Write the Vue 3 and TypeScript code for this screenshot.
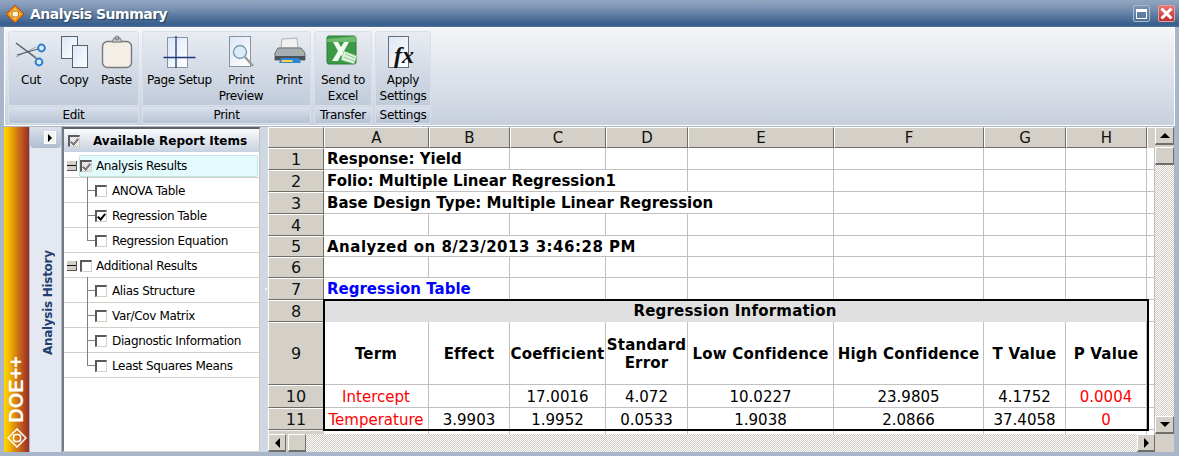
<script setup lang="ts">
interface Cell { t?: string; span?: number; cls?: string }
interface Row { n: number; h: number; cells: Cell[] }

const columnLetters = ['A', 'B', 'C', 'D', 'E', 'F', 'G', 'H']
const columnWidths = [105, 81, 96, 82, 146, 150, 82, 81, 8]

function blanks(count: number): Cell[] {
  return Array.from({ length: count }, () => ({}))
}
function lead(n: number, h: number, text: string, span: number, cls = 'b'): Row {
  return { n, h, cells: [{ t: text, span, cls }, ...blanks(9 - span)] }
}
function heads(list: string[]): Cell[] {
  return list.map((t) => ({ t, cls: 'b c' }))
}
function values(list: string[]): Cell[] {
  return list.map((t, i) => ({ t, cls: i === 0 || i === 7 ? 'c red low' : 'c low' }))
}

const rows: Row[] = [
  lead(1, 22, 'Response: Yield', 2),
  lead(2, 22, 'Folio: Multiple Linear Regression1', 4),
  lead(3, 22, 'Base Design Type: Multiple Linear Regression', 5),
  { n: 4, h: 22, cells: blanks(9) },
  lead(5, 21, 'Analyzed on 8/23/2013 3:46:28 PM', 4, 'b wide'),
  { n: 6, h: 21, cells: blanks(9) },
  lead(7, 22, 'Regression Table', 2, 'b blue'),
  { n: 8, h: 22, cells: [{ t: 'Regression Information', span: 8, cls: 'b c band' }, {}] },
  { n: 9, h: 63, cells: [...heads(['Term', 'Effect', 'Coefficient', 'Standard Error', 'Low Confidence', 'High Confidence', 'T Value', 'P Value']), {}] },
  { n: 10, h: 23, cells: [...values(['Intercept', '', '17.0016', '4.072', '10.0227', '23.9805', '4.1752', '0.0004']), {}] },
  { n: 11, h: 22, cells: [...values(['Temperature', '3.9903', '1.9952', '0.0533', '1.9038', '2.0866', '37.4058', '0']), {}] },
]

const gridColumns = `56px ${columnWidths.map((w) => `${w}px`).join(' ')}`
const gridRows = `21px ${rows.map((r) => `${r.h}px`).join(' ')} 4px`
const spanStyle = (c: Cell) => (c.span ? { gridColumn: `span ${c.span}` } : undefined)

interface Item { label: string; child?: boolean; state?: 'on' | 'mixed'; hot?: boolean; line?: 'mid' | 'end' }
const items: Item[] = [
  { label: 'Analysis Results', state: 'mixed', hot: true },
  { label: 'ANOVA Table', child: true, line: 'mid' },
  { label: 'Regression Table', child: true, state: 'on', line: 'mid' },
  { label: 'Regression Equation', child: true, line: 'end' },
  { label: 'Additional Results' },
  { label: 'Alias Structure', child: true, line: 'mid' },
  { label: 'Var/Cov Matrix', child: true, line: 'mid' },
  { label: 'Diagnostic Information', child: true, line: 'mid' },
  { label: 'Least Squares Means', child: true, line: 'end' },
]
</script>

<template>
  <div class="window">
    <header class="title">
      <svg class="logo" width="20" height="20" viewBox="0 0 20 20">
        <path d="M10 1 19 10 10 19 1 10Z" fill="#f08a1c" stroke="#a94a12" />
        <path d="M10 4 16 10 10 16 4 10Z" fill="#ffd24a" />
        <rect x="7" y="7" width="6.5" height="6" rx="2" fill="#fff8d8" stroke="#b5651d" />
      </svg>
      <span class="title-text">Analysis Summary</span>
      <span class="spring"></span>
      <span class="win-btn restore"><i></i></span>
      <span class="win-btn close">
        <svg width="13" height="13" viewBox="0 0 13 13"><path d="M1.5 1.5 11.5 11.5M11.5 1.5 1.5 11.5" stroke="#fff" stroke-width="3" /></svg>
      </span>
    </header>

    <section class="ribbon">
      <div class="group">
        <div class="tools">
          <div class="tool w42">
            <svg class="ic" width="36" height="36" viewBox="0 0 36 36">
              <path d="M3 9 23 23M3 23 23 13" stroke="#9aa1a8" stroke-width="1" fill="none" />
              <path d="M3 9 24 25" stroke="#59616a" stroke-width="1.400" />
              <path d="M4 21 25 15" stroke="#59616a" stroke-width="1.200" />
              <circle cx="28.500" cy="14" r="3.400" fill="#dbe9f8" stroke="#2f7fd0" stroke-width="2" />
              <circle cx="26" cy="28" r="3.400" fill="#dbe9f8" stroke="#2f7fd0" stroke-width="2" />
            </svg>
            <span>Cut</span>
          </div>
          <div class="tool w44">
            <svg class="ic" width="36" height="36" viewBox="0 0 36 36">
              <rect x="5.500" y="2.500" width="16" height="22" fill="url(#pg)" stroke="#59616a" />
              <rect x="16.500" y="11.500" width="15" height="22" fill="url(#pg)" stroke="#59616a" />
            </svg>
            <span>Copy</span>
          </div>
          <div class="tool w41">
            <svg class="ic" width="36" height="36" viewBox="0 0 36 36">
              <rect x="3.500" y="7.500" width="29" height="26" rx="5" fill="#f3efe6" stroke="#77797c" stroke-width="1.400" />
              <path d="M13 8 15 4H21L23 8Z" fill="#c8c8c8" stroke="#77797c" />
              <circle cx="18" cy="4" r="2" fill="none" stroke="#77797c" />
            </svg>
            <span>Paste</span>
          </div>
        </div>
        <div class="group-label">Edit</div>
      </div>

      <div class="group">
        <div class="tools print">
          <div class="tool w69">
            <svg class="ic" width="36" height="36" viewBox="0 0 36 36">
              <rect x="5.500" y="3.500" width="20" height="30" fill="url(#pg)" stroke="#8a93a0" />
              <path d="M14 2V34M1.500 23.500H33.500" stroke="#1c3a78" stroke-width="1.300" fill="none" />
            </svg>
            <span>Page Setup</span>
          </div>
          <div class="tool w54">
            <svg class="ic" width="36" height="36" viewBox="0 0 36 36">
              <rect x="6.500" y="2.500" width="21" height="30" fill="url(#pg)" stroke="#8a93a0" />
              <circle cx="17" cy="18" r="6.500" fill="#dcebf8" stroke="#7f9ab5" stroke-width="1.400" />
              <path d="M22 23 30 32" stroke="#9a9a9a" stroke-width="2.400" />
            </svg>
            <span>Print<br />Preview</span>
          </div>
          <div class="tool w42">
            <svg class="ic" width="36" height="36" viewBox="0 0 36 36">
              <path d="M11 5 26 4 27 14H10Z" fill="#f2f2f2" stroke="#b0b0b0" />
              <path d="M7 14H30L34 19V26H4V19Z" fill="#a7adb3" stroke="#6a6f75" />
              <rect x="4" y="22" width="30" height="4" fill="#4e5359" />
              <path d="M10 24H28L30 29H8Z" fill="#2e86d8" />
              <path d="M11 26H21L22 28H10Z" fill="#ffd24a" />
              <circle cx="29" cy="18" r="1.300" fill="#8bd44a" />
            </svg>
            <span>Print</span>
          </div>
        </div>
        <div class="group-label">Print</div>
      </div>

      <div class="group">
        <div class="tools">
          <div class="tool w54">
            <svg class="ic" width="36" height="36" viewBox="0 0 36 36">
              <rect x="2" y="2" width="29" height="28" rx="2" fill="#3c9a47" stroke="#2c7a3a" />
              <path d="M2 5 31 2V8L2 8Z" fill="#8fd08a" opacity=".6" />
              <path d="M8 8H13L16 13 19 8H24L19 17 25 27H19L16 21 13 27H7L13 17Z" fill="#f2fbf0" />
              <path d="M19 17 32 22 29 30 16 26Z" fill="#dff3dc" stroke="#6cb86a" stroke-width=".6" />
              <path d="M20 20 30 24M19 23 29 27" stroke="#7fbd7d" stroke-width=".8" />
            </svg>
            <span>Send to<br />Excel</span>
          </div>
        </div>
        <div class="group-label">Transfer</div>
      </div>

      <div class="group">
        <div class="tools">
          <div class="tool w52">
            <svg class="ic" width="36" height="36" viewBox="0 0 36 36">
              <rect x="3.500" y="2.500" width="20" height="31" fill="url(#pg)" stroke="#6a6f75" />
              <text x="9" y="29" class="fx">fx</text>
            </svg>
            <span>Apply<br />Settings</span>
          </div>
        </div>
        <div class="group-label">Settings</div>
      </div>

      <svg class="defs" width="0" height="0">
        <defs>
          <linearGradient id="pg" x1="0" y1="0" x2="1" y2="1">
            <stop offset="0" stop-color="#dce6f8" />
            <stop offset="1" stop-color="#ffffff" />
          </linearGradient>
        </defs>
      </svg>
    </section>

    <main class="body">
      <aside class="brand">
        <span class="brand-text">DOE++</span>
        <svg width="20" height="20" viewBox="0 0 20 20">
          <path d="M10 1 19 10 10 19 1 10Z" fill="none" stroke="#fff" stroke-width="1.500" />
          <rect x="6.500" y="6.500" width="7" height="7" rx="2.500" fill="none" stroke="#fff" stroke-width="1.500" />
        </svg>
      </aside>

      <aside class="history">
        <div class="history-top">
          <span class="mini"><i></i></span>
        </div>
        <div class="history-label"><span>Analysis History</span></div>
      </aside>

      <nav class="tree">
        <div class="tree-head">
          <span class="box mixed"></span>
          <strong>Available Report Items</strong>
        </div>
        <div v-for="it in items" :key="it.label" class="tree-row" :class="{ child: it.child }">
          <span v-if="it.child" class="elbow" :class="it.line"></span>
          <span v-else class="expander"></span>
          <div class="tree-item" :class="{ hot: it.hot }">
            <span class="box" :class="it.state"></span>
            <span class="tree-text">{{ it.label }}</span>
          </div>
        </div>
      </nav>

      <div class="splitter"><i></i></div>

      <section class="sheet">
        <div class="cells" :style="{ gridTemplateColumns: gridColumns, gridTemplateRows: gridRows }">
          <div class="hd"></div>
          <div v-for="l in columnLetters" :key="l" class="hd">{{ l }}</div>
          <div class="hd last"></div>

          <template v-for="r in rows" :key="r.n">
            <div class="hd rownum">{{ r.n }}</div>
            <div
              v-for="(c, i) in r.cells"
              :key="i"
              class="cell"
              :class="c.cls"
              :style="spanStyle(c)"
            >{{ c.t }}</div>
          </template>

          <div class="hd tail"></div>
          <div v-for="i in 9" :key="'tail' + i" class="cell tail-cell"></div>

          <div class="frame"></div>
        </div>

        <div class="vscroll">
          <span class="sb up"><i></i></span>
          <span class="sb thumb"></span>
          <span class="track"></span>
          <span class="sb down"><i></i></span>
        </div>
        <div class="hscroll">
          <span class="sb left"><i></i></span>
          <span class="sb thumb"></span>
          <span class="track"></span>
          <span class="sb right"><i></i></span>
        </div>
        <div class="corner"></div>
      </section>
    </main>
  </div>
</template>

<style scoped>
.window {
  width: 1179px;
  height: 456px;
  display: flex;
  flex-direction: column;
  overflow: hidden;
  background: #a9b6c9;
  font-family: "DejaVu Sans", sans-serif;
  color: #000;
}

/* title bar */
.title {
  height: 27px;
  flex: none;
  display: flex;
  align-items: center;
  padding: 0 4px 0 5px;
  gap: 4px;
  box-sizing: border-box;
  background: linear-gradient(#93a6c0 0, #7b93b2 30%, #375d8c 90%, #4a6d98 100%);
}
.logo { flex: none; }
.title-text {
  color: #fff;
  font-weight: 700;
  font-size: 14px;
  letter-spacing: -0.5px;
  margin-left: 1px;
  text-shadow: 1px 1px 1px #24405f;
}
.spring { flex: 1; }
.win-btn {
  width: 17px;
  height: 17px;
  display: flex;
  align-items: center;
  justify-content: center;
  border-radius: 2px;
  box-sizing: border-box;
  border: 1px solid #a8b9d0;
  margin-left: 4px;
}
.restore { background: linear-gradient(#7f95b3, #4f6f98); }
.restore i {
  width: 9px;
  height: 6px;
  border: 1px solid #fff;
  border-top-width: 3px;
  display: block;
  background: #5f7ca3;
}
.close { background: linear-gradient(#e97070, #c22f30); border-color: #e5a0a0; }

/* ribbon */
.ribbon {
  flex: none;
  height: 99px;
  margin: 0 4px 1px;
  box-sizing: border-box;
  padding: 3px 3px;
  display: flex;
  gap: 3px;
  border: 1px solid #fff;
  background: linear-gradient(#f4f5f8, #c8d0dd);
  font-size: 12px;
  letter-spacing: -0.3px;
  line-height: 16px;
}
.defs { position: absolute; }
.group {
  display: flex;
  flex-direction: column;
  gap: 1px;
}
.tools {
  flex: none;
  height: 75px;
  display: flex;
  box-sizing: border-box;
  padding: 1px 1px 0;
  border: 1px solid #d9dfe8;
  border-radius: 3px 3px 0 0;
  background: linear-gradient(#e9ecf2, #c0cbda);
}
.tools.print { padding: 1px 0 0 2px; }
.group-label {
  height: 17px;
  box-sizing: border-box;
  text-align: center;
  border: 1px solid #d9dfe8;
  border-radius: 0 0 3px 3px;
  background: linear-gradient(#d8deea, #b6c3d4);
  line-height: 15px;
}
.tool {
  display: flex;
  flex-direction: column;
  align-items: center;
  text-align: center;
  white-space: nowrap;
  padding-top: 1px;
}
.ic { flex: none; margin-bottom: 2px; }
.w41 { width: 41px; }
.w42 { width: 42px; }
.w44 { width: 44px; }
.w52 { width: 52px; }
.w54 { width: 54px; }
.w69 { width: 69px; }
.fx {
  font-family: "Liberation Serif", serif;
  font-style: italic;
  font-weight: 700;
  font-size: 24px;
  letter-spacing: 0;
  fill: #111;
}

/* body */
.body {
  flex: none;
  height: 325px;
  display: flex;
  padding-left: 4px;
  padding-right: 5px;
}
.brand {
  width: 25px;
  flex: none;
  display: flex;
  flex-direction: column;
  align-items: center;
  justify-content: flex-end;
  gap: 5px;
  padding-bottom: 4px;
  box-sizing: border-box;
  background: linear-gradient(90deg, #ffd800 0, #f0b000 25%, #c96a1a 60%, #9a2c26 100%);
}
.brand-text {
  writing-mode: vertical-rl;
  transform: rotate(180deg);
  color: #fff;
  font-family: "Liberation Sans", sans-serif;
  font-weight: 700;
  font-size: 20px;
  line-height: 25px;
}
.history {
  width: 31px;
  flex: none;
  margin-left: 1px;
  display: flex;
  flex-direction: column;
  background: #e4e9f1;
}
.history-top {
  height: 21px;
  flex: none;
  display: flex;
  align-items: center;
  justify-content: flex-end;
  padding-right: 5px;
  border-radius: 0 0 4px 4px;
  background: linear-gradient(#dbe2ec, #aebcd0);
}
.mini {
  width: 12px;
  height: 13px;
  background: #f2f2f2;
  border: 1px solid #fff;
  display: flex;
  align-items: center;
  justify-content: center;
  box-sizing: border-box;
}
.mini i {
  border-left: 4px solid #000;
  border-top: 4px solid transparent;
  border-bottom: 4px solid transparent;
}
.history-label {
  flex: 1;
  display: flex;
  justify-content: center;
  padding-top: 102px;
  padding-left: 4px;
}
.history-label span {
  writing-mode: vertical-rl;
  transform: rotate(180deg);
  height: 106px;
  font-size: 12px;
  font-weight: 700;
  letter-spacing: -0.3px;
  color: #233f70;
  text-align: center;
  white-space: nowrap;
}

/* tree */
.tree {
  width: 198px;
  flex: none;
  margin-left: 1px;
  box-sizing: border-box;
  background: #fff;
  border-left: 2px solid #76797e;
  border-top: 2px solid #5e6165;
  border-right: 1px solid #c9c5bd;
  border-bottom: 1px solid #d5d2cb;
  font-size: 12px;
  letter-spacing: -0.35px;
}
.tree-head {
  height: 24px;
  box-sizing: border-box;
  display: flex;
  align-items: center;
  padding-left: 4px;
  background: linear-gradient(#fbfcfe, #c6d0df);
  border-bottom: 1px solid #fff;
}
.tree-head strong {
  font-size: 12px;
  letter-spacing: 0;
  margin-left: 13px;
  white-space: nowrap;
}
.tree-row {
  height: 25px;
  box-sizing: border-box;
  display: flex;
  align-items: center;
  border-bottom: 1px solid #d4d0c8;
  padding-left: 3px;
  position: relative;
}
.tree-row.child { padding-left: 0; }
.expander {
  flex: none;
  width: 10px;
  height: 10px;
  box-sizing: border-box;
  background: linear-gradient(#d4d0c8 0 4px, #111 4px 5px, #d4d0c8 5px);
  border-right: 1px solid #555;
  border-bottom: 1px solid #555;
  margin-right: 2px;
  margin-top: 1px;
}
.elbow {
  position: absolute;
  left: 23px;
  top: -1px;
  width: 8px;
  border-left: 1px solid #808080;
  height: 26px;
}
.elbow::after {
  content: "";
  position: absolute;
  left: 0;
  top: 13px;
  width: 8px;
  border-top: 1px solid #808080;
}
.elbow.end { height: 14px; }
.child .tree-item { margin-left: 30px; }
.tree-item {
  flex: 1;
  height: 22px;
  margin-right: 1px;
  margin-top: 1px;
  display: flex;
  align-items: center;
  box-sizing: border-box;
  border: 1px solid transparent;
  white-space: nowrap;
}
.tree-item.hot {
  background: #e4fbfd;
  border-color: #c2e4e8;
  border-radius: 2px;
}
.box {
  flex: none;
  width: 12px;
  height: 12px;
  box-sizing: border-box;
  border: 1px solid #d4d0c8;
  border-top: 2px solid #5a5a5a;
  border-left: 2px solid #5a5a5a;
  background: #fff;
  position: relative;
  display: inline-block;
}
.box.on::after, .box.mixed::after {
  content: "";
  position: absolute;
  left: 1.500px;
  top: 0;
  width: 3px;
  height: 6px;
  border: solid #000;
  border-width: 0 2px 2px 0;
  transform: rotate(40deg);
}
.box.mixed { background: repeating-conic-gradient(#cfcfcf 0 25%, #fff 0 50%) 0 0 / 2px 2px; }
.box.mixed::after { border-color: #777; }
.tree-text { margin-left: 5px; padding-top: 1px; }
.tree-row:not(.child) .tree-text { margin-left: 4px; }

.splitter {
  width: 8px;
  flex: none;
  background: #cfd7e3;
  position: relative;
}
.splitter i {
  position: absolute;
  left: 5px;
  top: 161px;
  width: 2px;
  height: 2px;
  background: #f4f6f9;
}

/* sheet */
.sheet {
  width: 906px;
  flex: none;
  display: grid;
  grid-template-columns: 887px 19px;
  grid-template-rows: 307px 18px;
  background: #fff;
}
.cells {
  display: grid;
  position: relative;
  overflow: hidden;
  background: #fff;
  font-size: 15px;
  line-height: 18px;
}
.hd {
  background: #d4d0c8;
  box-sizing: border-box;
  border-top: 1px solid #fff;
  border-left: 1px solid #fff;
  border-right: 1px solid #6f6d68;
  border-bottom: 1px solid #6f6d68;
  display: flex;
  align-items: center;
  justify-content: center;
  color: #111;
}
.rownum { font-size: 16px; padding-top: 1px; }
.hd.last, .hd.tail { border-right-color: #d4d0c8; border-bottom-color: #d4d0c8; }
.hd.tail { border-top-color: #f4f3f0; }
.cell {
  box-sizing: border-box;
  border-right: 1px solid #c0c0c0;
  border-bottom: 1px solid #c0c0c0;
  padding: 1px 0 0 3px;
  display: flex;
  align-items: center;
  white-space: nowrap;
}
.b { font-weight: 700; }
.c { justify-content: center; text-align: center; padding-left: 0; white-space: normal; }
.b.c { letter-spacing: 0.2px; }
.low { padding-top: 2px; }
.blue { color: #0000ff; }
.red { color: #ff0000; }
.wide { letter-spacing: 0.5px; }
.band { background: #e0e0e0; border-color: #e0e0e0; }
.tail-cell { border-bottom: none; }
.frame {
  position: absolute;
  left: 55px;
  top: 172px;
  width: 826px;
  height: 132px;
  box-sizing: border-box;
  border: 2px solid #000;
  pointer-events: none;
}
.vscroll, .hscroll { display: flex; background: #d4d0c8; }
.vscroll { flex-direction: column; }
.track {
  flex: 1;
  background: repeating-conic-gradient(#cfcbc3 0 25%, #fff 0 50%) 0 0 / 2px 2px;
}
.sb {
  flex: none;
  width: 18px;
  height: 18px;
  box-sizing: border-box;
  background: #d4d0c8;
  border-top: 1px solid #fff;
  border-left: 1px solid #fff;
  border-right: 1px solid #6f6d68;
  border-bottom: 2px solid #6f6d68;
  display: flex;
  align-items: center;
  justify-content: center;
}
.vscroll .sb { width: 19px; }
.vscroll .thumb { margin-top: 2px; }
.hscroll .thumb { margin-left: 2px; }
.sb.up i { border: 5px solid transparent; border-bottom: 5px solid #000; border-top: 0; }
.sb.down i { border: 5px solid transparent; border-top: 5px solid #000; border-bottom: 0; }
.sb.left i { border: 5px solid transparent; border-right: 5px solid #000; border-left: 0; }
.sb.right i { border: 5px solid transparent; border-left: 5px solid #000; border-right: 0; }
.corner { background: #d4d0c8; }
</style>
